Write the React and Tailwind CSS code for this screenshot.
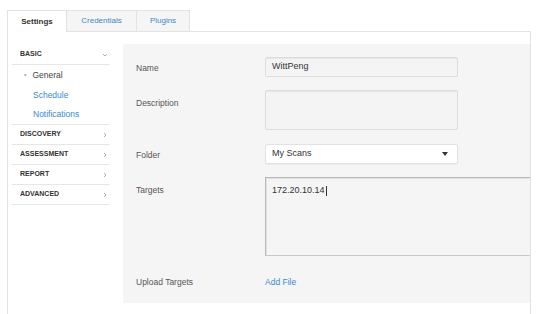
import React from 'react';

// Barra lateral: seções e itens
const secoes = [
    { titulo: 'DISCOVERY' },
    { titulo: 'ASSESSMENT' },
    { titulo: 'REPORT' },
    { titulo: 'ADVANCED' },
];

function Chevron({ down }) {
    return (
        <svg width="6" height="6" viewBox="0 0 6 6" className="text-[#aab]">
            {down ? (
                <path d="M1 2 L3 4 L5 2" fill="none" stroke="currentColor" strokeWidth="1" />
            ) : (
                <path d="M2 1 L4 3 L2 5" fill="none" stroke="currentColor" strokeWidth="1" />
            )}
        </svg>
    );
}

function App() {
    return (
        <div className="w-[553px] h-[314px] bg-white overflow-hidden" style={{ fontFamily: '"Liberation Sans", Arial, sans-serif' }}>
            <div className="ml-[7px] mt-[10px] w-[524px] overflow-hidden">
                {/* Abas */}
                <div className="flex h-[22px] border-b border-[#e3e3e3] text-[8px]">
                    <div className="w-[60px] h-[22px] bg-white border border-b-0 border-[#e3e3e3] text-[#333] font-bold flex items-center justify-center">Settings</div>
                    <div className="w-[70px] h-[21px] bg-[#f5f5f5] border-t border-r border-[#e3e3e3] text-[#3a8ac8] flex items-center justify-center">Credentials</div>
                    <div className="w-[53px] h-[21px] bg-[#f5f5f5] border-t border-r border-[#e3e3e3] text-[#3a8ac8] flex items-center justify-center">Plugins</div>
                </div>

                {/* Conteúdo */}
                <div className="flex border-l border-r border-[#e3e3e3] h-[282px] pt-[11px] overflow-hidden">
                    <div className="ml-[4px] mt-[2px] w-[98px] shrink-0">
                        <div className="h-[20px] flex items-center justify-between pl-[8px] pr-[2px] border-b border-[#e6e6e6] text-[7px] font-bold text-[#333]">
                            BASIC <Chevron down />
                        </div>
                        <div className="h-[20px] flex items-center text-[8.5px] text-[#444] pl-[12px]">
                            <span className="text-[#aaa] text-[7px] mr-[6px]">•</span>General
                        </div>
                        <div className="h-[20px] flex items-center text-[8.5px] text-[#3a8ac8] pl-[21px]">Schedule</div>
                        <div className="h-[20px] flex items-center text-[8.5px] text-[#3a8ac8] pl-[21px] border-b border-[#e6e6e6]">Notifications</div>
                        {secoes.map((s) => (
                            <div key={s.titulo} className="h-[20px] flex items-center justify-between pl-[8px] pr-[2px] border-b border-[#e6e6e6] text-[7px] font-bold text-[#333]">
                                {s.titulo} <Chevron />
                            </div>
                        ))}
                    </div>

                    <div className="ml-[13px] mt-px flex-1 h-[259px] bg-[#f5f5f5] pl-[13px] pt-[13px] text-[8.5px] text-[#555] min-w-0">
                        <div className="flex items-center h-[20px]">
                            <div className="w-[129px] shrink-0 pt-[3px]">Name</div>
                            <div className="w-[193px] h-[20px] border border-[#dcdcdc] bg-[#f4f4f4] rounded-[2px] shadow-[inset_0_1px_1px_rgba(0,0,0,0.06)] px-[6px] flex items-center text-[9px] text-[#333]">WittPeng</div>
                        </div>
                        <div className="flex mt-[13px]">
                            <div className="w-[129px] shrink-0 pt-[7px]">Description</div>
                            <div className="w-[193px] h-[40px] border border-[#dcdcdc] bg-[#f4f4f4] rounded-[2px] shadow-[inset_0_1px_1px_rgba(0,0,0,0.06)]"></div>
                        </div>
                        <div className="flex items-center mt-[14px] h-[20px]">
                            <div className="w-[129px] shrink-0 pt-[2px]">Folder</div>
                            <div className="w-[193px] h-[20px] border border-[#e2e2e2] bg-white rounded-[2px] shadow-[0_1px_1px_rgba(0,0,0,0.04)] px-[6px] flex items-center justify-between text-[9px] text-[#333]">
                                My Scans
                                <svg width="6" height="4" viewBox="0 0 6 4" className="mr-[3px]"><path d="M0 0 H6 L3 4 Z" fill="#333" /></svg>
                            </div>
                        </div>
                        <div className="flex mt-[13px]">
                            <div className="w-[129px] shrink-0 pt-[7px]">Targets</div>
                            <div className="w-[300px] shrink-0 h-[79px] border border-[#c8c8c8] border-t-[#b8b8b8] border-l-[#b8b8b8] bg-[#f5f5f5] shadow-[inset_1px_1px_1px_rgba(0,0,0,0.08)] px-[6px] pt-[6px] text-[9px] text-[#333]">
                                172.20.10.14<span className="inline-block w-px h-[10px] bg-[#333] align-middle ml-px"></span>
                            </div>
                        </div>
                        <div className="flex items-center mt-[19px] h-[14px]">
                            <div className="w-[129px] shrink-0">Upload Targets</div>
                            <div className="text-[#3a8ac8]">Add File</div>
                        </div>
                    </div>
                </div>
            </div>
        </div>
    );
}

export default App;
